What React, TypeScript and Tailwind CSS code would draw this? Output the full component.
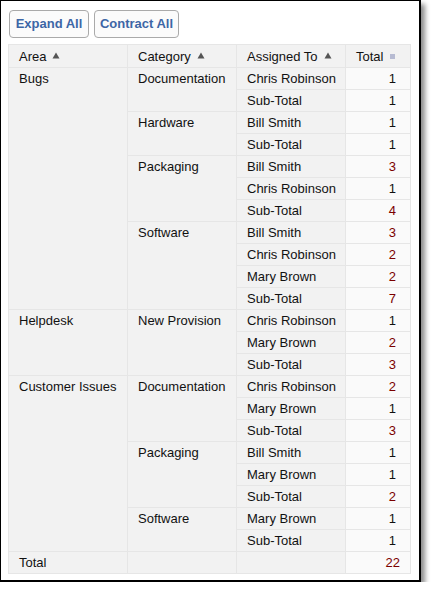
import React from "react";

type Row = { area?: [string, number]; cat?: [string, number]; who: string; n: number };

const rows: Row[] = [
  { area: ["Bugs", 11], cat: ["Documentation", 2], who: "Chris Robinson", n: 1 },
  { who: "Sub-Total", n: 1 },
  { cat: ["Hardware", 2], who: "Bill Smith", n: 1 },
  { who: "Sub-Total", n: 1 },
  { cat: ["Packaging", 3], who: "Bill Smith", n: 3 },
  { who: "Chris Robinson", n: 1 },
  { who: "Sub-Total", n: 4 },
  { cat: ["Software", 4], who: "Bill Smith", n: 3 },
  { who: "Chris Robinson", n: 2 },
  { who: "Mary Brown", n: 2 },
  { who: "Sub-Total", n: 7 },
  { area: ["Helpdesk", 3], cat: ["New Provision", 3], who: "Chris Robinson", n: 1 },
  { who: "Mary Brown", n: 2 },
  { who: "Sub-Total", n: 3 },
  { area: ["Customer Issues", 8], cat: ["Documentation", 3], who: "Chris Robinson", n: 2 },
  { who: "Mary Brown", n: 1 },
  { who: "Sub-Total", n: 3 },
  { cat: ["Packaging", 3], who: "Bill Smith", n: 1 },
  { who: "Mary Brown", n: 1 },
  { who: "Sub-Total", n: 2 },
  { cat: ["Software", 2], who: "Mary Brown", n: 1 },
  { who: "Sub-Total", n: 1 },
];

const Tri = () => (
  <svg width="8" height="7" viewBox="0 0 8 7" className="inline-block ml-[6px] mb-[5px]">
    <path d="M4 0.5 L7.5 6.5 L0.5 6.5 Z" fill="#555" />
  </svg>
);

const cellBase = "border border-[#e6e6e6] h-[22px] p-0 align-top";
const txt = "pl-[10px] pt-[3px] leading-[15px]";

export default function App() {
  return (
    <div
      className="w-[421px] h-[582px] bg-white border-black border-l border-t border-r-2 border-b-2 shadow-[4px_4px_5px_rgba(0,0,0,0.45)] pt-[9px] pl-[7px] text-[13px] text-[#111]"
      style={{ fontFamily: '"Liberation Sans", Arial, sans-serif' }}
    >
      <div className="flex gap-[5px] ml-[1px]">
        <button className="h-[28px] w-[80px] rounded-[4px] border border-[#aaaaaa] bg-[#fbfbfb] text-[#3d66a6] font-bold text-[13px]">
          Expand All
        </button>
        <button className="h-[28px] w-[85px] rounded-[4px] border border-[#aaaaaa] bg-[#fbfbfb] text-[#3d66a6] font-bold text-[13px]">
          Contract All
        </button>
      </div>
      <table className="mt-[6px] border-collapse table-fixed w-[402px] border border-[#a3a3a3]">
        <colgroup>
          <col className="w-[119px]" />
          <col className="w-[109px]" />
          <col className="w-[109px]" />
          <col className="w-[65px]" />
        </colgroup>
        <thead>
          <tr className="h-[23px] bg-[#f2f2f2]">
            <th className={`${cellBase} font-normal text-left`}>
              <div className={`${txt} pt-[4px]`}>Area<Tri /></div>
            </th>
            <th className={`${cellBase} font-normal text-left`}>
              <div className={`${txt} pt-[4px]`}>Category<Tri /></div>
            </th>
            <th className={`${cellBase} font-normal text-left`}>
              <div className={`${txt} pt-[4px]`}>Assigned To<Tri /></div>
            </th>
            <th className={`${cellBase} font-normal text-left`}>
              <div className={`${txt} pt-[4px]`}>
                Total
                <span className="inline-block w-[5px] h-[5px] bg-[#b7bbd2] ml-[7px] mb-[2px]" />
              </div>
            </th>
          </tr>
        </thead>
        <tbody>
          {rows.map((r, i) => (
            <tr key={i} className="h-[22px]">
              {r.area && (
                <td rowSpan={r.area[1]} className={`${cellBase} bg-[#f2f2f2]`}>
                  <div className={txt}>{r.area[0]}</div>
                </td>
              )}
              {r.cat && (
                <td rowSpan={r.cat[1]} className={`${cellBase} bg-[#f2f2f2]`}>
                  <div className={txt}>{r.cat[0]}</div>
                </td>
              )}
              <td className={`${cellBase} bg-[#f2f2f2]`}>
                <div className={txt}>{r.who}</div>
              </td>
              <td className={`${cellBase} bg-[#fafafa] text-right`}>
                <div className={`pr-[14px] pt-[3px] leading-[15px] ${r.n > 1 ? "text-[#7a0000]" : "text-[#111]"}`}>
                  {r.n}
                </div>
              </td>
            </tr>
          ))}
          <tr className="h-[22px]">
            <td className={`${cellBase} bg-[#f2f2f2]`}>
              <div className={txt}>Total</div>
            </td>
            <td className={`${cellBase} bg-[#f2f2f2]`} />
            <td className={`${cellBase} bg-[#f2f2f2]`} />
            <td className={`${cellBase} bg-[#fafafa] text-right`}>
              <div className="pr-[10px] pt-[3px] leading-[15px] text-[#7a0000]">22</div>
            </td>
          </tr>
        </tbody>
      </table>
    </div>
  );
}
